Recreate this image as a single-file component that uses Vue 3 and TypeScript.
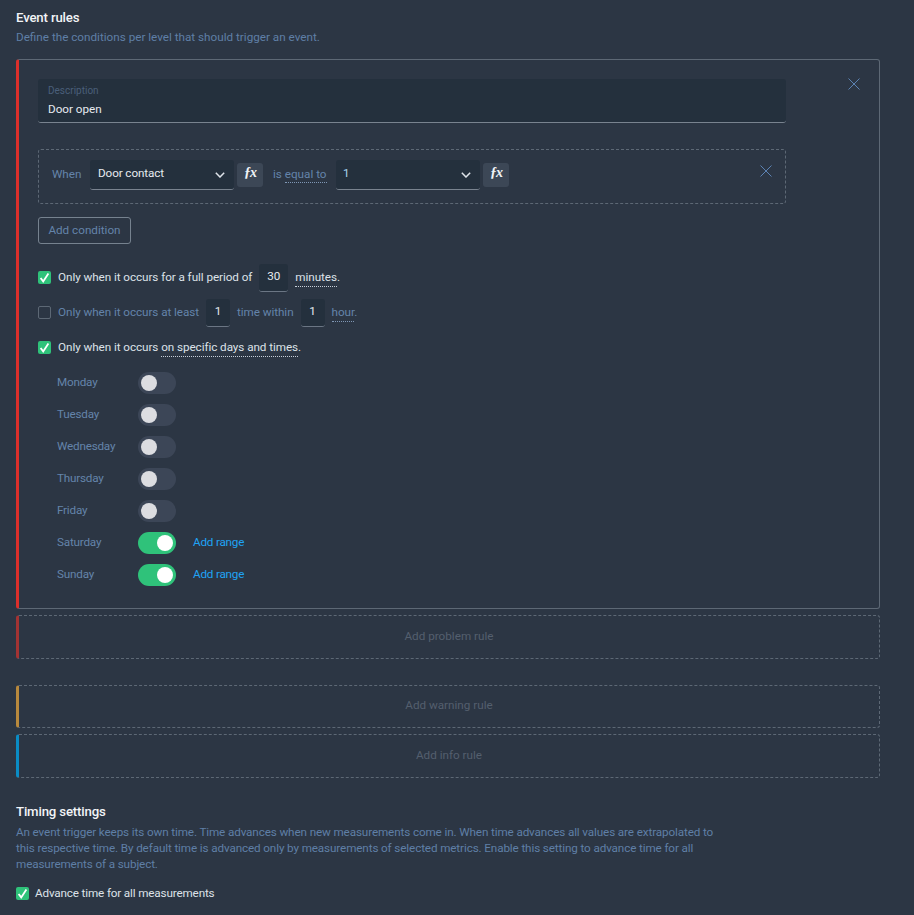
<script setup lang="ts">
const days = [
  { name: 'Monday', on: false },
  { name: 'Tuesday', on: false },
  { name: 'Wednesday', on: false },
  { name: 'Thursday', on: false },
  { name: 'Friday', on: false },
  { name: 'Saturday', on: true },
  { name: 'Sunday', on: true },
]
</script>

<template>
  <div class="page">
    <h2 class="title">Event rules</h2>
    <p class="sub">Define the conditions per level that should trigger an event.</p>

    <section class="card">
      <svg class="x x-card" viewBox="0 0 12 12"><path d="M.5.5l11 11M11.5.5l-11 11" /></svg>
      <div class="desc">
        <span class="desc-label">Description</span>
        <span class="desc-value">Door open</span>
      </div>

      <div class="cond">
        <span class="muted when">When</span>
        <div class="select sel-a">
          <span>Door contact</span>
          <svg class="chev" viewBox="0 0 10 6"><path d="M.8.8L5 5l4.2-4.2" /></svg>
        </div>
        <span class="fx">ƒx</span>
        <span class="muted is">is <span class="dotted">equal to</span></span>
        <div class="select sel-b">
          <span class="blue-val">1</span>
          <svg class="chev" viewBox="0 0 10 6"><path d="M.8.8L5 5l4.2-4.2" /></svg>
        </div>
        <span class="fx">ƒx</span>
        <svg class="x x-cond" viewBox="0 0 12 12"><path d="M.5.5l11 11M11.5.5l-11 11" /></svg>
      </div>

      <button class="add-cond">Add condition</button>

      <div class="opt opt-first">
        <span class="check on"><svg viewBox="0 0 13 13"><path d="M2.6 7l2.6 3.4L10.4 2.6" /></svg></span>
        <span class="bright">Only when it occurs for a full period of</span>
        <span class="num wide">30</span>
        <span class="bright"><span class="dotted">minutes</span>.</span>
      </div>
      <div class="opt">
        <span class="check"></span>
        <span class="muted">Only when it occurs at least</span>
        <span class="num">1</span>
        <span class="muted">time within</span>
        <span class="num">1</span>
        <span class="muted"><span class="dotted">hour</span>.</span>
      </div>
      <div class="opt">
        <span class="check on"><svg viewBox="0 0 13 13"><path d="M2.6 7l2.6 3.4L10.4 2.6" /></svg></span>
        <span class="bright">Only when it occurs <span class="dotted">on specific days and times</span>.</span>
      </div>

      <div class="days">
        <div v-for="d in days" :key="d.name" class="day">
          <span class="muted day-name">{{ d.name }}</span>
          <span class="toggle" :class="{ active: d.on }"><i></i></span>
          <a v-if="d.on" class="range">Add range</a>
        </div>
      </div>
    </section>

    <div class="ghost problem">Add problem rule</div>
    <div class="ghost warning">Add warning rule</div>
    <div class="ghost info">Add info rule</div>

    <h2 class="title timing">Timing settings</h2>
    <p class="para">An event trigger keeps its own time. Time advances when new measurements come in. When time advances all values are extrapolated to this respective time. By default time is advanced only by measurements of selected metrics. Enable this setting to advance time for all measurements of a subject.</p>
    <div class="adv">
      <span class="check on"><svg viewBox="0 0 13 13"><path d="M2.6 7l2.6 3.4L10.4 2.6" /></svg></span>
      <span class="bright adv-label">Advance time for all measurements</span>
    </div>
  </div>
</template>

<style>
html, body { margin: 0; background: #2c3644; }
</style>

<style scoped>
.page {
  box-sizing: border-box;
  width: 914px;
  height: 915px;
  overflow: hidden;
  padding: 9px 0 0 16px;
  background: #2c3644;
  font-family: Roboto, "Noto Sans", sans-serif;
  font-size: 11.7px;
  line-height: 16px;
  color: #dfe4ea;
}
.title { margin: 0; font-size: 13.2px; letter-spacing: -0.15px; line-height: 18px; font-weight: 500; color: #f2f4f7; }
.sub { margin: 2px 0 0; height: 16px; color: #5f7fa6; }
.muted { color: #6484aa; }
.bright { color: #dde2e8; }
.dotted { border-bottom: 1px dotted #c8d0da; padding-bottom: 2px; }
.muted .dotted { border-bottom-color: #7f97b5; }

.card {
  position: relative;
  box-sizing: border-box;
  width: 864px;
  height: 550px;
  margin-top: 14px;
  padding: 19px 0 0 19px;
  border: 1px solid #5d6875;
  border-left: 3px solid #dc2f2b;
  border-radius: 3px;
}
.x { fill: none; stroke: #5b82b3; stroke-width: 1; }
.x-card { position: absolute; top: 18px; right: 19px; width: 12px; height: 12px; }
.x-cond { position: absolute; top: 15px; right: 13px; width: 12px; height: 12px; }

.desc {
  box-sizing: border-box;
  display: flex;
  flex-direction: column;
  width: 748px;
  height: 44px;
  padding: 6px 10px 0;
  background: #24303d;
  border-bottom: 1px solid #79838f;
  border-radius: 3px;
}
.desc-label { font-size: 10px; line-height: 12px; color: #4a5f7a; }
.desc-value { margin-top: 4px; color: #e6eaef; }

.cond {
  position: relative;
  box-sizing: border-box;
  display: flex;
  align-items: flex-start;
  width: 748px;
  height: 55px;
  margin-top: 26px;
  padding: 10px 0 0 13px;
  border: 1px dashed #5d6875;
  border-radius: 3px;
}
.when { width: 38px; line-height: 29px; }
.select {
  box-sizing: border-box;
  display: flex;
  align-items: center;
  justify-content: space-between;
  height: 30px;
  padding: 0 8px 3px 8px;
  background: #24303d;
  border-bottom: 1px solid #79838f;
  border-radius: 3px;
  color: #e6eaef;
  letter-spacing: -0.1px;
}
.sel-a { width: 144px; }
.sel-b { width: 144px; padding-left: 7px; }
.blue-val { color: #a9d4f2; }
.chev { width: 10px; height: 6px; fill: none; stroke: #dfe4ea; stroke-width: 1.5; margin-right: 1px; margin-top: 4px; }
.fx {
  width: 26px;
  height: 24px;
  margin: 3px 0 0 3px;
  background: #3c4756;
  border-radius: 3px;
  text-align: center;
  font-family: "Liberation Serif", serif;
  font-style: italic;
  font-weight: 700;
  font-size: 14px;
  letter-spacing: -1px;
  line-height: 20px;
  color: #f0f3f6;
}
.is { width: 63px; margin-left: 10px; line-height: 29px; }
.is .dotted { padding-bottom: 1px; }

.add-cond {
  display: block;
  box-sizing: border-box;
  width: 93px;
  height: 27px;
  margin-top: 13px;
  padding: 0 0 2px;
  background: transparent;
  border: 1px solid #76828f;
  border-radius: 3px;
  font: inherit;
  color: #6484aa;
}

.opt { display: flex; align-items: center; height: 28px; margin-top: 7px; gap: 7px; letter-spacing: -0.06px; }
.opt > .bright, .opt > .muted { margin-bottom: 2px; }
.opt > .check { margin-bottom: 1px; }
.opt-first { margin-top: 20px; }
.check {
  box-sizing: border-box;
  flex: none;
  width: 13px;
  height: 13px;
  border: 1px solid #5d6875;
  border-radius: 2px;
}
.check.on { background: #2fc27a; border: 0; }
.check svg { display: block; width: 13px; height: 13px; fill: none; stroke: #fff; stroke-width: 1.8; }
.num {
  width: 24px;
  height: 27px;
  background: #24303d;
  border-bottom: 1px solid #6b7684;
  border-radius: 3px;
  text-align: center;
  line-height: 25px;
  color: #e6eaef;
}
.num.wide { width: 29px; }

.days { margin-top: 10px; margin-left: 19px; display: flex; flex-direction: column; gap: 10px; }
.day { display: flex; align-items: center; height: 22px; }
.day-name { width: 81px; letter-spacing: -0.2px; margin-bottom: 2px; }
.toggle {
  position: relative;
  width: 38px;
  height: 22px;
  border-radius: 11px;
  background: #3c4657;
}
.toggle i {
  position: absolute;
  top: 3px;
  left: 3px;
  width: 16px;
  height: 16px;
  border-radius: 50%;
  background: #dcdde1;
}
.toggle.active { background: #2fc27a; }
.toggle.active i { left: 19px; background: #fff; }
.range { margin-left: 17px; margin-bottom: 2px; letter-spacing: -0.2px; color: #1fa3f5; }

.ghost {
  box-sizing: border-box;
  width: 864px;
  border: 1px dashed #5d6875;
  border-left: 3px solid;
  border-radius: 3px;
  text-align: center;
  color: #545f6e;
}
.problem { height: 44px; line-height: 41px; margin-top: 6px; border-left-color: #a33333; }
.warning { height: 43px; line-height: 39px; margin-top: 26px; border-left-color: #b8893d; }
.info { height: 44px; line-height: 41px; margin-top: 6px; border-left-color: #0a8cc5; }

.timing { margin-top: 25px; }
.para { width: 716px; margin: 3px 0 0; letter-spacing: -0.12px; color: #5f7fa6; }
.adv { display: flex; align-items: center; gap: 6px; height: 16px; margin-top: 13px; }
.adv-label { letter-spacing: -0.15px; }
</style>
